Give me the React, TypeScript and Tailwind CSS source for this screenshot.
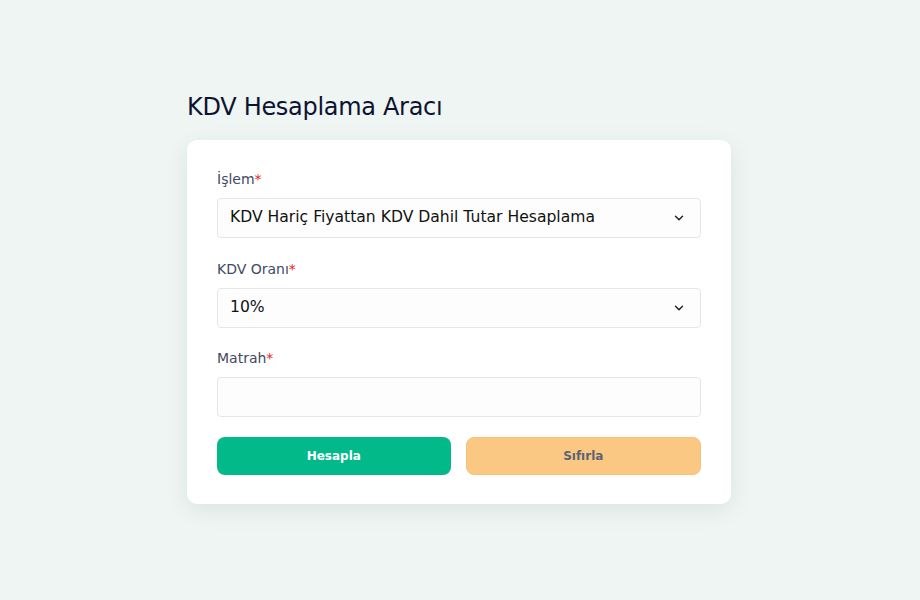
import { ChevronDown } from 'lucide-react'

function Label({ text }: { text: string }): React.JSX.Element {
  return (
    <label className="block text-[14px] leading-[18px] text-[#3f4a63] mb-[10px]">
      {text}
      <span className="text-[#ef1c1c]">*</span>
    </label>
  )
}

function SelectBox({ value }: { value: string }): React.JSX.Element {
  return (
    <div className="flex items-center justify-between h-[40px] px-[12px] bg-[#fdfdfd] border border-[#e4e6ea] rounded-[4px]">
      <span className="text-[15.6px] text-[#111111]">{value}</span>
      <ChevronDown className="w-[14px] h-[14px] text-[#222] mr-[2px]" strokeWidth={2.5} />
    </div>
  )
}

export default function App(): React.JSX.Element {
  return (
    <div
      className="w-[920px] h-[600px] bg-[#eef5f2] pl-[187px]"
      style={{ fontFamily: '"DejaVu Sans", "Open Sans", sans-serif' }}
    >
      <div className="w-[544px] pt-[92px]">
        <h1 className="text-[24px] leading-[30px] text-[#0d1330] tracking-[-0.3px] mb-[18px]">KDV Hesaplama Aracı</h1>
        <div className="bg-white rounded-[10px] shadow-[0_6px_24px_rgba(0,40,30,0.08)] px-[30px] pt-[30px] pb-[29px]">
          <Label text="İşlem" />
          <SelectBox value="KDV Hariç Fiyattan KDV Dahil Tutar Hesaplama" />
          <div className="h-[22px]" />
          <Label text="KDV Oranı" />
          <SelectBox value="10%" />
          <div className="h-[21px]" />
          <Label text="Matrah" />
          <div className="h-[40px] bg-[#fdfdfd] border border-[#e4e6ea] rounded-[4px]" />
          <div className="flex gap-[15px] mt-[20px]">
            <button
              type="button"
              className="flex-1 h-[38px] rounded-[8px] bg-[#02b98a] text-white text-[12px] font-bold"
            >
              Hesapla
            </button>
            <button
              type="button"
              className="flex-1 h-[38px] rounded-[8px] bg-[#fbc883] border border-[#f7c07a] text-[#5b6275] text-[12px] font-bold"
            >
              Sıfırla
            </button>
          </div>
        </div>
      </div>
    </div>
  )
}
